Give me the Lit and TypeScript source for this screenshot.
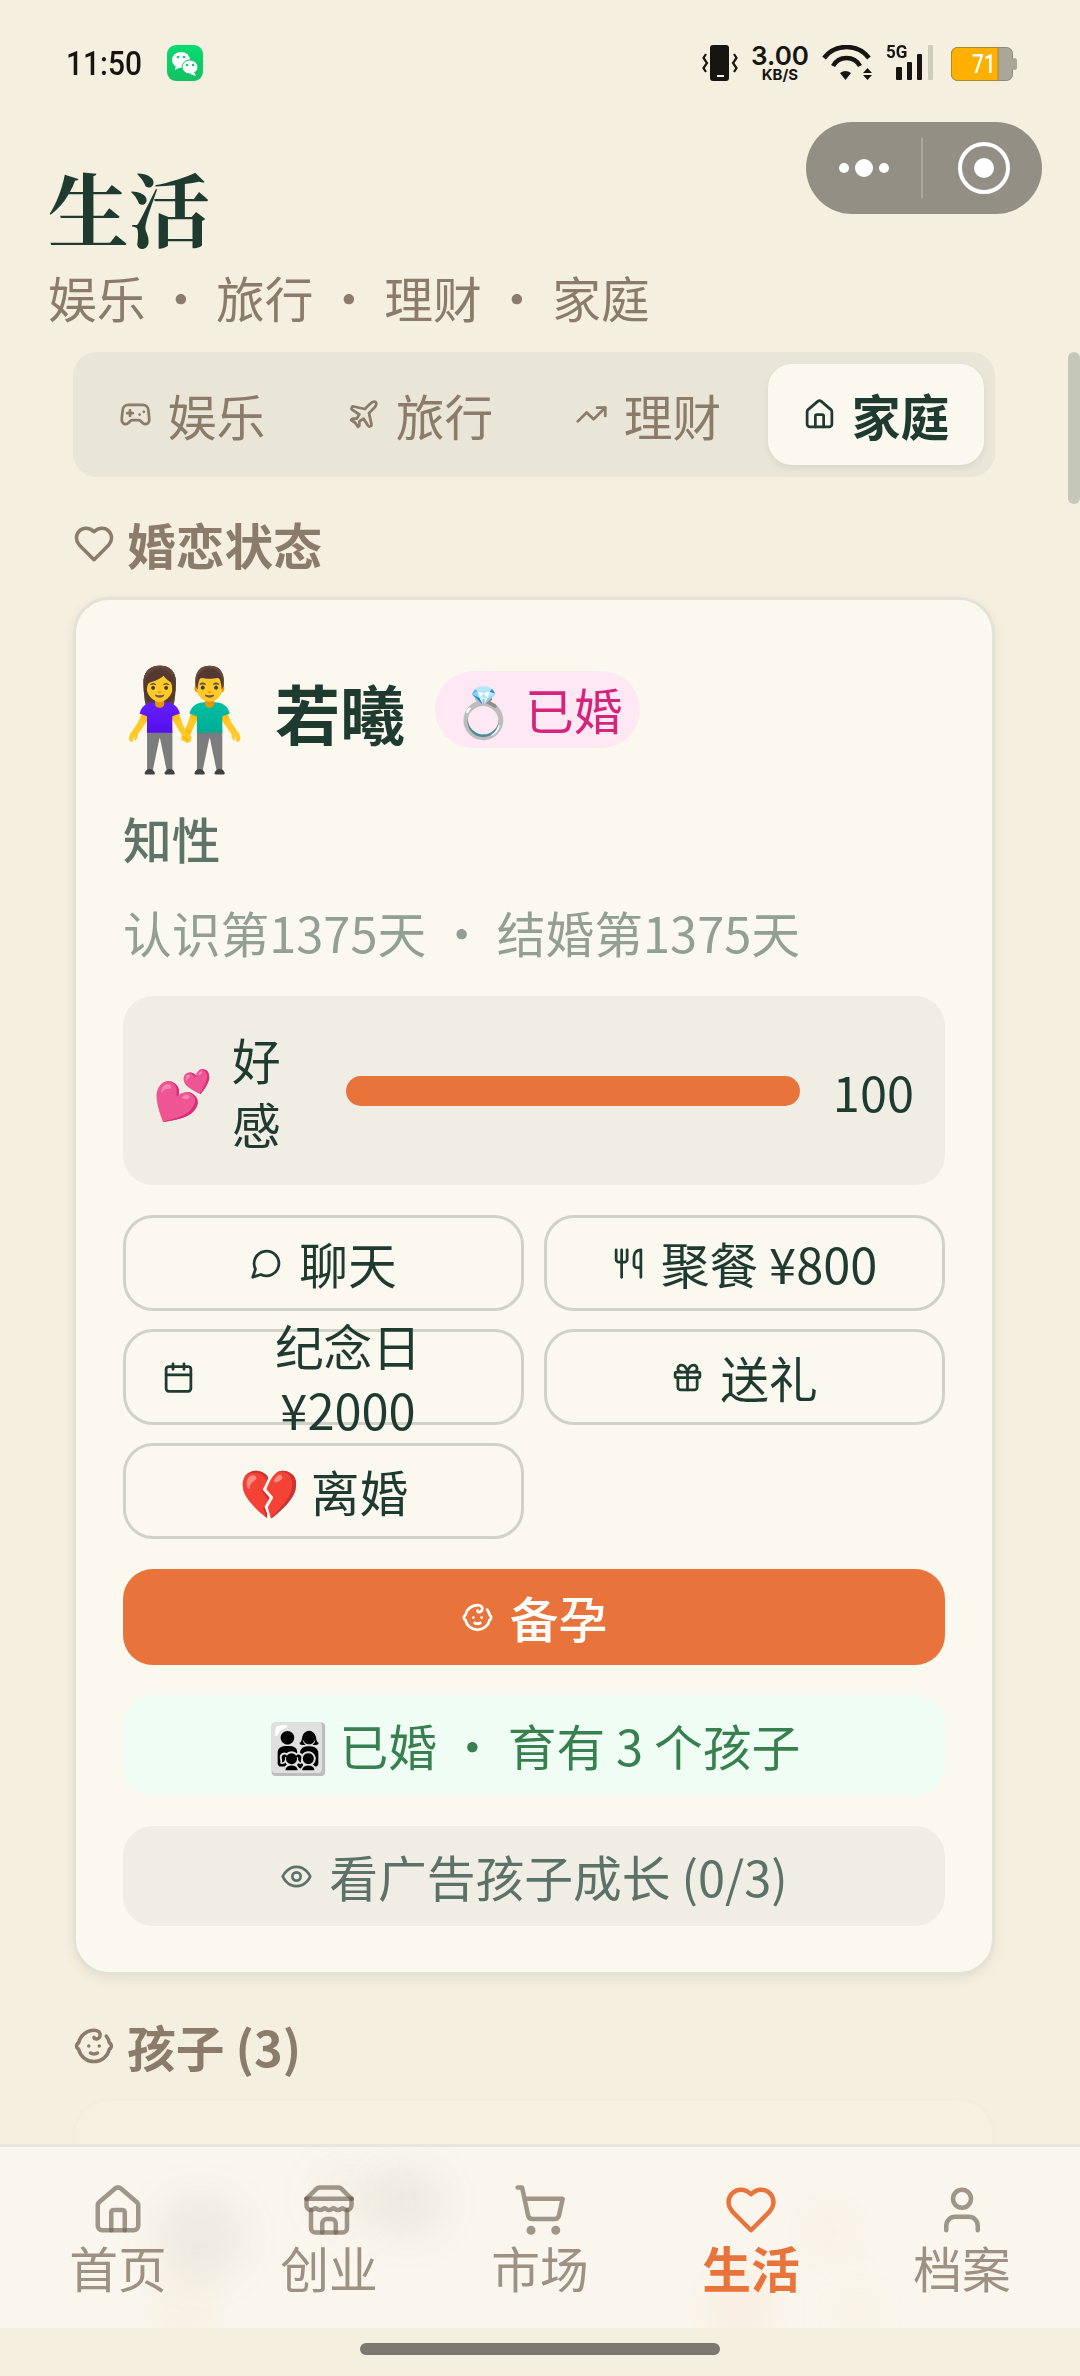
import { LitElement, css, html, svg } from "lit";
import { customElement } from "lit/decorators.js";

const ICONS: Record<string, unknown> = {
  game: svg`<line x1="6" x2="10" y1="11" y2="11"/><line x1="8" x2="8" y1="9" y2="13"/><line x1="15" x2="15.01" y1="12" y2="12"/><line x1="18" x2="18.01" y1="10" y2="10"/><path d="M17.32 5H6.68a4 4 0 0 0-3.978 3.59c-.006.052-.01.101-.017.152C2.604 9.416 2 14.456 2 16a3 3 0 0 0 3 3c1 0 1.5-.5 2-1l1.414-1.414A2 2 0 0 1 9.828 16h4.344a2 2 0 0 1 1.414.586L17 18c.5.5 1 1 2 1a3 3 0 0 0 3-3c0-1.545-.604-6.584-.685-7.258-.007-.05-.011-.1-.017-.151A4 4 0 0 0 17.32 5z"/>`,
  plane: svg`<path d="M17.8 19.2 16 11l3.5-3.5C21 6 21.5 4 21 3c-1-.5-3 0-4.5 1.5L13 8 4.8 6.2c-.5-.1-.9.1-1.1.5l-.3.5c-.2.5-.1 1 .3 1.3L9 12l-2 3H4l-1 1 3 2 2 3 1-1v-3l3-2 3.5 5.3c.3.4.8.5 1.3.3l.5-.2c.4-.3.6-.7.5-1.2z"/>`,
  trend: svg`<polyline points="22 7 13.5 15.5 8.5 10.5 2 17"/><polyline points="16 7 22 7 22 13"/>`,
  home: svg`<path d="M15 21v-8a1 1 0 0 0-1-1h-4a1 1 0 0 0-1 1v8"/><path d="M3 10a2 2 0 0 1 .709-1.528l7-5.999a2 2 0 0 1 2.582 0l7 5.999A2 2 0 0 1 21 10v9a2 2 0 0 1-2 2H5a2 2 0 0 1-2-2z"/>`,
  heart: svg`<path d="M19 14c1.49-1.46 3-3.21 3-5.5A5.5 5.5 0 0 0 16.5 3c-1.76 0-3 .5-4.5 2-1.5-1.5-2.74-2-4.5-2A5.5 5.5 0 0 0 2 8.5c0 2.3 1.5 4.05 3 5.5l7 7Z"/>`,
  chat: svg`<path d="M7.9 20A9 9 0 1 0 4 16.1L2 22Z"/>`,
  food: svg`<path d="M3 2v7c0 1.1.9 2 2 2h4a2 2 0 0 0 2-2V2"/><path d="M7 2v20"/><path d="M21 15V2a5 5 0 0 0-5 5v6c0 1.1.9 2 2 2h3Zm0 0v7"/>`,
  calendar: svg`<path d="M8 2v4"/><path d="M16 2v4"/><rect x="3" y="4" width="18" height="18" rx="2"/><path d="M3 10h18"/>`,
  gift: svg`<rect x="3" y="8" width="18" height="4" rx="1"/><path d="M12 8v13"/><path d="M19 12v7a2 2 0 0 1-2 2H7a2 2 0 0 1-2-2v-7"/><path d="M7.5 8a2.5 2.5 0 0 1 0-5A4.8 8 0 0 1 12 8a4.8 8 0 0 1 4.5-5 2.5 2.5 0 0 1 0 5"/>`,
  baby: svg`<path d="M9 12h.01"/><path d="M15 12h.01"/><path d="M10 16c.5.3 1.2.5 2 .5s1.5-.2 2-.5"/><path d="M19 6.3a9 9 0 0 1 1.8 3.9 2 2 0 0 1 0 3.6 9 9 0 0 1-17.6 0 2 2 0 0 1 0-3.6A9 9 0 0 1 12 3c2 0 3.5 1.1 3.5 2.5s-.9 2.5-2 2.5c-.8 0-1.5-.4-1.5-1"/>`,
  eye: svg`<path d="M2 12s3-7 10-7 10 7 10 7-3 7-10 7-10-7-10-7Z"/><circle cx="12" cy="12" r="3"/>`,
  store: svg`<path d="m2 7 4.41-4.41A2 2 0 0 1 7.83 2h8.34a2 2 0 0 1 1.42.59L22 7"/><path d="M4 12v8a2 2 0 0 0 2 2h12a2 2 0 0 0 2-2v-8"/><path d="M15 22v-4a2 2 0 0 0-2-2h-2a2 2 0 0 0-2 2v4"/><path d="M2 7h20"/><path d="M22 7v3a2 2 0 0 1-2 2a2.7 2.7 0 0 1-1.59-.63.7.7 0 0 0-.82 0A2.7 2.7 0 0 1 16 12a2.7 2.7 0 0 1-1.59-.63.7.7 0 0 0-.82 0A2.7 2.7 0 0 1 12 12a2.7 2.7 0 0 1-1.59-.63.7.7 0 0 0-.82 0A2.7 2.7 0 0 1 8 12a2.7 2.7 0 0 1-1.59-.63.7.7 0 0 0-.82 0A2.7 2.7 0 0 1 4 12a2 2 0 0 1-2-2V7"/>`,
  cart: svg`<circle cx="8" cy="21" r="1"/><circle cx="19" cy="21" r="1"/><path d="M2.05 2.05h2l2.66 12.42a2 2 0 0 0 2 1.58h9.78a2 2 0 0 0 1.95-1.57l1.65-7.43H5.12"/>`,
  user: svg`<path d="M19 21v-2a4 4 0 0 0-4-4H9a4 4 0 0 0-4 4v2"/><circle cx="12" cy="7" r="4"/>`,
};

const icon = (name: string, size: number) => html`<svg
  class="ic"
  width=${size}
  height=${size}
  viewBox="0 0 24 24"
  fill="none"
  stroke="currentColor"
  stroke-width="2"
  stroke-linecap="round"
  stroke-linejoin="round"
>${ICONS[name]}</svg>`;

const TABS = [
  { icon: "game", label: "娱乐" },
  { icon: "plane", label: "旅行" },
  { icon: "trend", label: "理财" },
  { icon: "home", label: "家庭", active: true },
];

const NAV = [
  { icon: "home", label: "首页" },
  { icon: "store", label: "创业" },
  { icon: "cart", label: "市场" },
  { icon: "heart", label: "生活", active: true },
  { icon: "user", label: "档案" },
];

// what shows through the frosted tab bar
const BLOBS = [
  { x: 200, y: 90, r: 44, c: "rgba(120,115,100,.09)" },
  { x: 408, y: 55, r: 36, c: "rgba(120,115,100,.09)" },
  { x: 350, y: 50, r: 40, c: "rgba(120,115,100,.04)" },
  { x: 185, y: 165, r: 30, c: "rgba(240,200,120,.1)" },
  { x: 740, y: 160, r: 36, c: "rgba(240,150,90,.08)" },
  { x: 860, y: 165, r: 30, c: "rgba(240,200,120,.06)" },
  { x: 830, y: 85, r: 34, c: "rgba(240,190,140,.06)" },
];

@customElement("app-root")
export class AppRoot extends LitElement {
  static styles = css`
    :host {
      display: block;
      position: relative;
      width: 1080px;
      height: 2376px;
      overflow: hidden;
      background: #f5efdf;
      color: #1f3b30;
      font-family: "Noto Sans CJK SC", "Noto Sans", sans-serif;
      font-size: 48.75px;
      line-height: 64px;
    }
    svg { display: block; }
    .ic { flex: none; }

    .status { display: flex; justify-content: space-between; height: 122px; padding: 45px 63px 0 66px; box-sizing: border-box; color: #161512; }
    .status-l { display: flex; gap: 26px; height: 36px; align-items: center; }
    .time { display: block; width: 75px; font: 500 34px/36px Roboto, sans-serif; white-space: nowrap; transform: scaleX(0.88); transform-origin: left center; }
    .status-r { display: flex; height: 36px; align-items: flex-start; gap: 14px; }
    .speed { display: flex; flex-direction: column; align-items: center; width: 56px; font-family: Inter, sans-serif; }
    .speed b { font-size: 26px; font-weight: 600; line-height: 22px; }
    .speed span { margin-top: 1px; font-size: 15px; font-weight: 700; line-height: 13px; }
    .net { position: relative; width: 50px; height: 36px; }
    .net span { position: absolute; left: 0; top: -4px; font: 700 19px/22px Roboto, sans-serif; transform: scaleX(0.9); transform-origin: left center; }
    .batt { position: relative; width: 66px; height: 36px; margin-left: 1px; }
    .batt span { position: absolute; left: 21px; top: 2px; color: #fff; font: 500 26px/34px Roboto, sans-serif; transform: scaleX(0.8); transform-origin: left center; }

    .capsule { position: absolute; left: 806px; top: 122px; width: 236px; height: 92px; border-radius: 46px; background: #938f85; }

    .head { padding: 0 48px; }
    h1 { margin: 36px 0 0; font: 700 81px/96px "Noto Serif CJK SC", "Noto Sans CJK SC", serif; color: #1f3b30; }
    .sub { margin-top: 11px; color: #8a7b6a; }

    .main { padding: 0 85px 0 73px; }
    .seg { display: grid; grid-template-columns: repeat(4, 1fr); gap: 12px; margin-top: 23px; padding: 12px 11px; background: #e9e5d7; border-radius: 24px; }
    .seg-item { display: flex; align-items: center; justify-content: center; gap: 16px; height: 101px; border-radius: 24px; color: #8a7b6a; }
    .seg-item.on { background: #fbf8f0; color: #1f3b30; font-weight: 700; box-shadow: 0 3px 6px rgba(60, 50, 30, 0.08); }

    .sec { display: flex; align-items: center; gap: 12px; margin-top: 35px; color: #8a7b6a; font-weight: 700; }
    .sec.kids { margin-top: 39px; }

    .card { margin-top: 21px; padding: 48px 47px; box-sizing: border-box; height: 1378px; border: 3px solid #e3e2d8; border-radius: 36px; background: #fbf8f0; box-shadow: 0 4px 12px rgba(60, 50, 30, 0.08); }
    .who { display: flex; align-items: center; height: 144px; }
    .avatar { width: 152px; margin-bottom: 18px; font-size: 99px; line-height: 126px; }
    .name { margin-bottom: 16px; font-size: 65px; font-weight: 700; }
    .badge { display: flex; align-items: center; margin: 0 0 22px 30px; padding: 0 18px; height: 77px; border-radius: 39px; background: #fde8f3; color: #d6247a; }
    .trait { margin-top: 14px; color: #5f7367; font-weight: 500; }
    .days { margin-top: 30px; color: #929f93; }
    .stat { display: flex; align-items: center; margin-top: 32px; padding: 0 31px 0 30px; height: 189px; border-radius: 30px; background: #f0ede5; }
    .stat-emoji { width: 79px; flex: none; font-size: 48px; }
    .stat-name { width: 49px; flex: none; margin-right: 65px; }
    .bar { flex: 1; height: 30px; border-radius: 15px; background: #e8743b; }
    .stat-val { margin-left: 33px; }

    .acts { display: grid; grid-template-columns: 1fr 1fr; gap: 18px 20px; margin-top: 30px; }
    .btn { display: flex; align-items: center; justify-content: center; gap: 16px; height: 96px; padding: 0 36px; box-sizing: border-box; border: 3px solid #d0d2c8; border-radius: 30px; text-align: center; }
    .wide { display: flex; align-items: center; justify-content: center; gap: 16px; height: 100px; border-radius: 30px; }
    .go { margin-top: 30px; height: 96px; background: #e8743b; color: #fff; font-weight: 500; }
    .ok { margin-top: 30px; background: #f0fdf4; color: #38804f; }
    .ad { margin-top: 31px; background: #f0ede5; color: #5c7266; }

    .next { margin-top: 20px; height: 100px; border: 3px solid #f3eddc; border-bottom: 0; border-radius: 36px 36px 0 0; background: #f5f0e0; }

    .nav { position: absolute; left: 0; right: 0; top: 2144px; height: 184px; box-sizing: border-box; display: grid; grid-template-columns: repeat(5, 1fr); padding: 36px 12.5px 0; border-top: 3px solid #e8e5dc; background: #faf6ee; color: #9c9183; overflow: hidden; }
    .blob { position: absolute; border-radius: 50%; filter: blur(18px); }
    .nav-item { position: relative; display: flex; flex-direction: column; align-items: center; }
    .nav-item .ic { color: #6f6353; stroke-opacity: 0.65; }
    .nav-item.on { color: #e8743b; font-weight: 700; }
    .nav-item.on .ic { color: #e8743b; stroke-opacity: 1; }
    .nav-item span { margin-top: -2px; }
    .home-bar { position: absolute; left: 360px; top: 2343px; width: 360px; height: 12px; border-radius: 6px; background: #7b786f; }
    .scroll { position: absolute; right: 0; top: 352px; width: 12px; height: 152px; border-radius: 6px; background: #c5c8b9; }
  `;

  render() {
    return html`
      <div class="status">
        <div class="status-l">
          <span class="time">11:50</span>
          <svg width="36" height="36" viewBox="0 0 36 36">
            <defs>
              <linearGradient id="wx" x1="0" y1="0" x2="0" y2="1">
                <stop offset="0" stop-color="#07dc70" />
                <stop offset="1" stop-color="#14c064" />
              </linearGradient>
            </defs>
            <rect width="36" height="36" rx="9" fill="url(#wx)" />
            <ellipse cx="14" cy="15" rx="9" ry="8" fill="#fff" />
            <path d="M9 20l-1 5 6-3z" fill="#fff" />
            <ellipse cx="23" cy="22" rx="8" ry="7" fill="#fff" stroke="#10c868" />
            <path d="M27 27l2 4-6-2z" fill="#fff" />
            <circle cx="11" cy="12" r="1.300" fill="#10c868" />
            <circle cx="17" cy="12" r="1.300" fill="#10c868" />
            <circle cx="20" cy="20" r="1.200" fill="#10c868" />
            <circle cx="26" cy="20" r="1.200" fill="#10c868" />
          </svg>
        </div>
        <div class="status-r">
          <svg width="36" height="36" viewBox="0 0 36 36">
            <rect x="8" width="19" height="36" rx="3" fill="#161512" />
            <rect x="15" y="30" width="7" height="2" fill="#f5efdf" />
            <path d="M4 9L1.500 13 5 18l-3.500 5L4 27M32 9l2.500 4-3.500 5 3.500 5-2.500 4" fill="none" stroke="#161512" stroke-width="2.200" />
          </svg>
          <div class="speed"><b>3.00</b><span>KB/S</span></div>
          <svg width="50" height="36" viewBox="0 0 50 36" fill="none" stroke="#161512" stroke-width="4.500">
            <path d="M2 13A28.500 28.500 0 0 1 47 13M11 21A15.400 15.400 0 0 1 38 21" />
            <path d="M18 28Q23.500 24 29 28L23.500 35z" fill="#161512" stroke="none" />
            <path d="M41 28l4.500-5 4.500 5zM41 30h9l-4.500 5z" fill="#161512" stroke="none" />
          </svg>
          <div class="net">
            <svg width="50" height="36" viewBox="0 0 50 36">
              <rect x="10" y="22" width="6" height="13" rx="1" fill="#161512" />
              <rect x="21" y="17" width="5" height="18" rx="1" fill="#161512" />
              <rect x="31" y="9" width="5" height="26" rx="1" fill="#161512" />
              <rect x="42" y="0" width="5" height="35" rx="1" fill="#cfcbbd" />
            </svg>
            <span>5G</span>
          </div>
          <div class="batt">
            <svg width="66" height="36" viewBox="0 0 66 36">
              <rect x="0.500" y="2.500" width="61" height="33" rx="6" fill="#aba698" stroke="#8d8876" />
              <path d="M6.500 2.500H47v33H6.500a6 6 0 0 1-6-6v-21a6 6 0 0 1 6-6z" fill="#ffb000" stroke="#a98a2f" />
              <rect x="61" y="13" width="5" height="12" rx="2.500" fill="#aba698" />
            </svg>
            <span>71</span>
          </div>
        </div>
      </div>

      <div class="capsule">
        <svg width="236" height="92" viewBox="0 0 236 92">
          <circle cx="38" cy="46" r="5" fill="#fff" />
          <circle cx="58" cy="46" r="9" fill="#fff" />
          <circle cx="78" cy="46" r="5" fill="#fff" />
          <rect x="115" y="16" width="2" height="60" fill="#aaa79e" />
          <circle cx="178" cy="46" r="24" fill="none" stroke="#fff" stroke-width="4" />
          <circle cx="178" cy="46" r="10" fill="#fff" />
        </svg>
      </div>

      <div class="head">
        <h1>生活</h1>
        <div class="sub">娱乐 · 旅行 · 理财 · 家庭</div>
      </div>

      <div class="main">
        <div class="seg">
          ${TABS.map(
            (t) => html`<div class="seg-item ${t.active ? "on" : ""}">
              ${icon(t.icon, 33)}<span>${t.label}</span>
            </div>`,
          )}
        </div>

        <div class="sec">${icon("heart", 42)}<span>婚恋状态</span></div>

        <div class="card">
          <div class="who">
            <span class="avatar">👫</span>
            <span class="name">若曦</span>
            <span class="badge">💍 已婚</span>
          </div>
          <div class="trait">知性</div>
          <div class="days">认识第1375天 · 结婚第1375天</div>
          <div class="stat">
            <span class="stat-emoji">💕</span>
            <span class="stat-name">好感</span>
            <div class="bar"></div>
            <span class="stat-val">100</span>
          </div>
          <div class="acts">
            <div class="btn">${icon("chat", 33)}<span>聊天</span></div>
            <div class="btn">${icon("food", 33)}<span>聚餐 ¥800</span></div>
            <div class="btn">${icon("calendar", 33)}<span>纪念日 ¥2000</span></div>
            <div class="btn">${icon("gift", 33)}<span>送礼</span></div>
            <div class="btn"><span>💔 离婚</span></div>
          </div>
          <div class="wide go">${icon("baby", 33)}<span>备孕</span></div>
          <div class="wide ok"><span>👨‍👩‍👧‍👦 已婚 · 育有 3 个孩子</span></div>
          <div class="wide ad">${icon("eye", 33)}<span>看广告孩子成长 (0/3)</span></div>
        </div>

        <div class="sec kids">${icon("baby", 42)}<span>孩子 (3)</span></div>
        <div class="next"></div>
      </div>

      <div class="scroll"></div>
      <div class="nav">
        ${BLOBS.map(
          (b) => html`<div
            class="blob"
            style="left:${b.x - b.r}px;top:${b.y - b.r}px;width:${b.r * 2}px;height:${b.r * 2}px;background:${b.c}"
          ></div>`,
        )}
        ${NAV.map(
          (n) => html`<div class="nav-item ${n.active ? "on" : ""}">
            ${icon(n.icon, 54)}<span>${n.label}</span>
          </div>`,
        )}
      </div>
      <div class="home-bar"></div>
    `;
  }
}
